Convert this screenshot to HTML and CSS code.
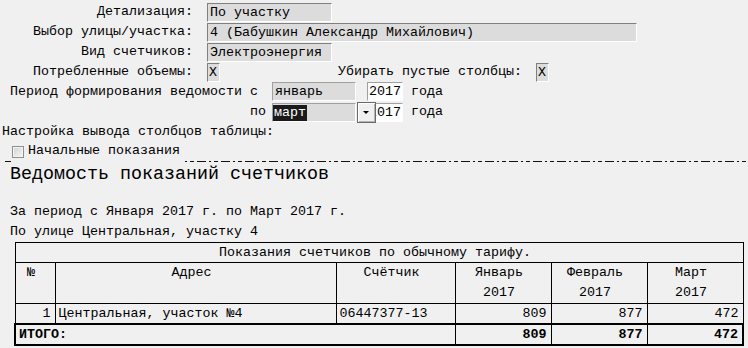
FILE: index.html
```html
<!DOCTYPE html>
<html lang="ru">
<head>
    <meta charset="UTF-8">
    <title>Ведомость показаний счетчиков</title>
    <link rel="stylesheet" href="styles.css">
</head>
<body>
    <div class="form">
        <div class="row"><span class="lbl">Детализация:</span><span class="field w-short">По участку</span></div>
        <div class="row"><span class="lbl">Выбор улицы/участка:</span><span class="field w-long">4 (Бабушкин Александр Михайлович)</span></div>
        <div class="row"><span class="lbl">Вид счетчиков:</span><span class="field w-short">Электроэнергия</span></div>
        <div class="row">
            <span class="lbl">Потребленные объемы:</span><span class="field flag">X</span>
            <span class="lbl2">Убирать пустые столбцы:</span><span class="field flag">X</span>
        </div>
        <div class="row">
            <span class="plbl">Период формирования ведомости с</span>
            <span class="select">январь</span>
            <span class="year">2017</span><span class="unit">года</span>
        </div>
        <div class="row row-to">
            <span class="plbl po">по</span>
            <span class="select open"><span class="hl">март</span><span class="drop"></span></span>
            <span class="year">2017</span><span class="unit">года</span>
        </div>
        <div class="row row-cfg">Настройка вывода столбцов таблицы:</div>
        <label class="chk"><span class="box"></span>Начальные показания</label>
    </div>
    <div class="sep"><span></span></div>

    <h1>Ведомость показаний счетчиков</h1>
    <div class="info">
        <p>За период с Января 2017 г. по Март 2017 г.</p>
        <p>По улице Центральная, участку 4</p>
    </div>

    <table class="sheet">
        <colgroup>
            <col class="c-n"><col class="c-addr"><col class="c-meter">
            <col class="c-m"><col class="c-m"><col class="c-m">
        </colgroup>
        <tr class="title"><td colspan="6">Показания счетчиков по обычному тарифу.</td></tr>
        <tr class="head">
            <td>№</td>
            <td>Адрес</td>
            <td>Счётчик</td>
            <td>Январь<br>2017</td>
            <td>Февраль<br>2017</td>
            <td>Март<br>2017</td>
        </tr>
        <tr class="data">
            <td class="num">1</td>
            <td class="txt">Центральная, участок №4</td>
            <td class="txt">06447377-13</td>
            <td class="num">809</td>
            <td class="num">877</td>
            <td class="num">472</td>
        </tr>
        <tr class="total">
            <td colspan="3" class="txt">ИТОГО:</td>
            <td class="num">809</td>
            <td class="num">877</td>
            <td class="num">472</td>
        </tr>
    </table>
</body>
</html>
```

FILE: styles.css
```css
body { margin: 0; width: 748px; height: 348px; overflow: hidden; background: #f0f0f0; color: #000; font-family: "Liberation Mono", "Courier New", monospace; font-size: 13.333px; line-height: 20px; }

/* form */
.form { padding-top: 2px; }
.row { display: flex; height: 20px; white-space: pre; }
.lbl { width: 193px; margin-right: 14px; text-align: right; }
.lbl2 { width: 184px; margin-left: 118px; margin-right: 14px; }
.field { box-sizing: border-box; height: 19px; margin-top: 1px; padding-left: 2px; border: 1px solid; border-color: #808080 #fff #fff #808080; background: #dcdcdc; line-height: 17px; overflow: hidden; }
.w-short { width: 125px; }
.w-long { width: 430px; }
.flag { width: 13px; padding-left: 1px; }

.plbl { box-sizing: border-box; width: 272px; padding-left: 10px; }
.plbl.po { padding-left: 250px; }
.select { position: relative; box-sizing: border-box; width: 84px; height: 19px; padding-left: 2px; border: 1px solid; border-color: #a0a0a0 #fff #fff #a0a0a0; background: #dcdcdc; line-height: 17px; }
.select.open { margin-top: 1px; padding-left: 0; }
.hl { display: inline-block; height: 16px; margin-top: 1px; padding-left: 1px; padding-right: 1px; background: #1a1a1a; color: #fff; line-height: 15px; }
.drop { position: absolute; left: 84px; top: -2px; z-index: 1; box-sizing: border-box; width: 19px; height: 21px; border: 1px solid #6a6a6a; background: #f0f0f0; box-shadow: inset 1px 1px #fff, inset -1px -1px #b4b4b4; }
.drop::after { content: ""; position: absolute; left: 5px; top: 8px; border-left: 3px solid transparent; border-right: 3px solid transparent; border-top: 3px solid #000; }
.year { box-sizing: border-box; width: 36px; height: 19px; margin-left: 11px; padding-left: 1px; border: 1px solid; border-color: #a0a0a0 #fff #fff #a0a0a0; background: #fff; line-height: 17px; }
.row-to .year { margin-top: 1px; }
.unit { margin-left: 8px; }
.row-cfg { padding-left: 2px; }

.chk { display: flex; height: 18px; padding-left: 12px; line-height: 18px; }
.box { box-sizing: border-box; width: 12px; height: 12px; margin-top: 4px; margin-right: 4px; border: 1px solid #8e8f8f; background: linear-gradient(135deg, #d2d2d2, #f6f6f6); box-shadow: inset 0 0 0 1px #f4f4f4; }

.sep { height: 1px; margin-top: 1px; margin-left: 5px; background: repeating-linear-gradient(90deg, #111 0 9px, transparent 9px 12px, #111 12px 14px, transparent 14px 17px, #111 17px 21px, transparent 21px 24px); }
.sep span { display: block; width: 174px; height: 1px; margin-left: 6px; background: #f0f0f0; }

/* report */
h1 { margin: 2px 0 0 10px; font-size: 18.333px; font-weight: normal; line-height: 22px; }
.info { margin-top: 16px; padding-left: 10px; }
.info p { margin: 0; }

.sheet { width: 728px; margin-left: 14px; border-collapse: collapse; table-layout: fixed; }
.c-n { width: 40px; }
.c-addr { width: 281px; }
.c-meter { width: 119px; }
.c-m { width: 96px; }
.sheet td { padding: 0; border: 1px solid #000; line-height: 19px; white-space: pre; overflow: hidden; }
.title td { padding-right: 8px; text-align: center; }
.head td { height: 39px; padding-right: 8px; vertical-align: top; text-align: center; line-height: 20px; }
.num { padding-right: 4px !important; text-align: right; }
.txt { padding-left: 3px !important; }
.total td { border-top: 2px solid #000; border-bottom: 2px solid #000; font-weight: bold; }
.total td:first-child { border-left: 2px solid #000; }
.total td:last-child { border-right: 2px solid #000; }
```
